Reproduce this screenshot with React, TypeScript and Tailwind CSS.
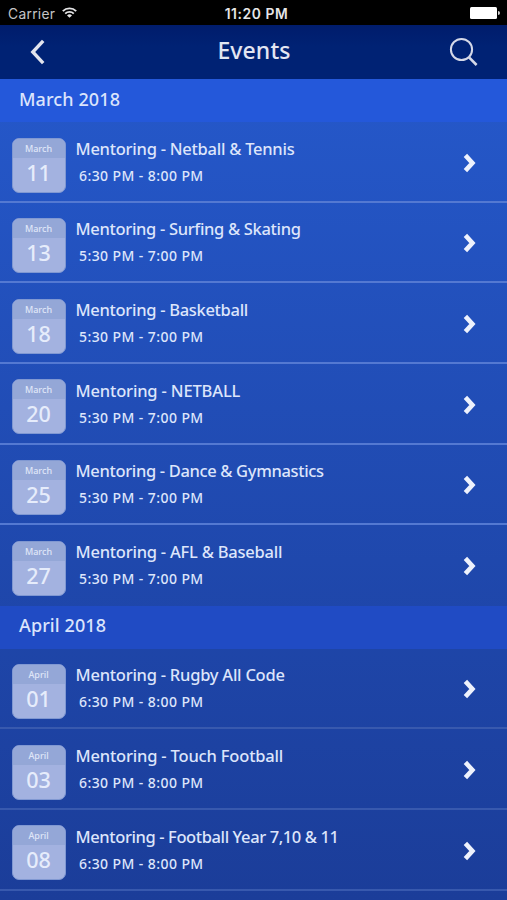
import React from 'react';

interface EventItem {
  day: string;
  title: string;
  time: string;
  tracking: string;
}

interface EventMonth {
  name: string;
  label: string;
  headerClass: string;
  lineClass: string;
  events: EventItem[];
}

const months: EventMonth[] = [
  {
    name: 'March',
    label: 'March 2018',
    headerClass: 'h-[43px] bg-[#2458da]',
    lineClass: 'border-[#5479d2]',
    events: [
      { day: '11', title: 'Mentoring - Netball & Tennis', time: '6:30 PM - 8:00 PM', tracking: 'tracking-[-0.25px]' },
      { day: '13', title: 'Mentoring - Surfing & Skating', time: '5:30 PM - 7:00 PM', tracking: 'tracking-[-0.32px]' },
      { day: '18', title: 'Mentoring - Basketball', time: '5:30 PM - 7:00 PM', tracking: 'tracking-[-0.3px]' },
      { day: '20', title: 'Mentoring - NETBALL', time: '5:30 PM - 7:00 PM', tracking: 'tracking-[-0.16px]' },
      { day: '25', title: 'Mentoring - Dance & Gymnastics', time: '5:30 PM - 7:00 PM', tracking: 'tracking-[-0.34px]' },
      { day: '27', title: 'Mentoring - AFL & Baseball', time: '5:30 PM - 7:00 PM', tracking: 'tracking-[-0.23px]' },
    ],
  },
  {
    name: 'April',
    label: 'April 2018',
    headerClass: 'h-[42.7px] bg-[#204bc4]',
    lineClass: 'border-[#3859ae]',
    events: [
      { day: '01', title: 'Mentoring - Rugby All Code', time: '6:30 PM - 8:00 PM', tracking: 'tracking-[-0.24px]' },
      { day: '03', title: 'Mentoring - Touch Football', time: '6:30 PM - 8:00 PM', tracking: 'tracking-[-0.18px]' },
      { day: '08', title: 'Mentoring - Football Year 7,10 & 11', time: '6:30 PM - 8:00 PM', tracking: 'tracking-[-0.39px]' },
    ],
  },
];

const StatusBar: React.FC = () => (
  <div className="grid grid-cols-3 items-center h-[25px] shrink-0 bg-black pt-[3px] font-['Inter','Liberation_Sans',sans-serif]">
    <div className="flex items-center gap-[7px] pl-2 text-[#c4c4c6]">
      <span className="text-[13.8px] leading-5 tracking-[0.3px]">Carrier</span>
      <svg width="15" height="11" viewBox="0 0 15 11" className="-mt-[3px]" fill="none" stroke="#e4e4e6" strokeWidth="1.9">
        <path d="M0.8 4.1a9.6 9.6 0 0 1 13.4 0" />
        <path d="M3.2 6.6a6.2 6.2 0 0 1 8.6 0" />
        <path d="M7.5 10.8L5 8.4a3.6 3.6 0 0 1 5 0z" fill="#e4e4e6" stroke="none" />
      </svg>
    </div>
    <div className="text-center text-[13.8px] leading-5 font-semibold tracking-[0.6px] text-[#e6e6e8] pl-1.5 whitespace-nowrap">11:20 PM</div>
    <div className="flex items-center justify-end pr-[7px] -mt-[2px]">
      <div className="w-[27px] h-3 bg-white rounded-[1.5px]" />
      <div className="w-[2px] h-1 ml-px bg-[#d0d0d0] rounded-r-full" />
    </div>
  </div>
);

const NavBar: React.FC = () => (
  <div className="flex items-center justify-between h-[54px] shrink-0 bg-linear-to-b from-[#001c6c] to-[#002274] to-40% pl-[30px] pr-[29px]">
    <button className="w-[29px]" aria-label="Back">
      <svg width="16" height="26" viewBox="0 0 16 26" fill="none" stroke="#e2e4ee" strokeWidth="3.4">
        <path d="M13.2 1.8L2.8 13l10.4 11.2" />
      </svg>
    </button>
    <h1 className="text-[23px] leading-8 font-medium tracking-[0.1px] text-[#e3e6f2] -mt-[4px]">Events</h1>
    <button aria-label="Search">
      <svg width="29" height="30" viewBox="0 0 29 30" fill="none" stroke="#d5d9e8" strokeWidth="2">
        <circle cx="12.5" cy="12.5" r="10.6" />
        <path d="M19.8 20.2l7.8 7.8" strokeWidth="2.6" />
      </svg>
    </button>
  </div>
);

const EventRow: React.FC<{ item: EventItem; month: string; last: boolean; lineClass: string }> = ({ item, month, last, lineClass }) => (
  <div className={`flex items-start h-[80.66px] shrink-0 pl-[11.5px] pr-[31px] ${last ? '' : `border-b-2 ${lineClass}`}`}>
    <div className="w-[54px] h-[55px] mt-[15.5px] shrink-0 rounded-[7px] overflow-hidden bg-[#a3b2e0] border border-[#8098d2] text-center text-[#e6ecfb]">
      <div className="h-[19px] bg-[#93a6d6] text-[9px] leading-[19px] font-medium opacity-90">{month}</div>
      <div className="text-[21.5px] leading-[29px] font-medium">{item.day}</div>
    </div>
    <div className="flex-1 min-w-0 pl-2.5 pt-[14.6px] whitespace-nowrap text-[#dde5fb]">
      <div className={`text-[16.5px] leading-6 font-medium ${item.tracking}`}>{item.title}</div>
      <div className="pl-[3.5px] mt-[3px] text-[14px] leading-6 font-medium tracking-[0.42px]">{item.time}</div>
    </div>
    <svg width="13" height="20" viewBox="0 0 13 20" className="mt-[30.7px] shrink-0" fill="none" stroke="#eef2fd" strokeWidth="4.6">
      <path d="M2.4 2.4l7 7.6-7 7.6" />
    </svg>
  </div>
);

const App: React.FC = () => {
  return (
    <div className="w-full h-[900px] overflow-hidden flex flex-col bg-[#1b3d98] font-['Noto_Sans',sans-serif]">
      <StatusBar />
      <NavBar />
      <div className="flex-1 min-h-0 overflow-hidden flex flex-col bg-linear-to-b from-[#2558ca] to-[#1b3d99]">
        {months.map((month) => (
          <section key={month.name} className="shrink-0">
            <h2 className={`pl-[19px] pt-[3.5px] text-[18px] leading-8 font-medium tracking-[0.1px] text-[#dbe4fc] ${month.headerClass}`}>{month.label}</h2>
            {month.events.map((item, i) => (
              <EventRow
                key={item.day}
                item={item}
                month={month.name}
                last={month.name === 'March' && i === month.events.length - 1}
                lineClass={month.lineClass}
              />
            ))}
          </section>
        ))}
      </div>
    </div>
  );
};

export default App;
